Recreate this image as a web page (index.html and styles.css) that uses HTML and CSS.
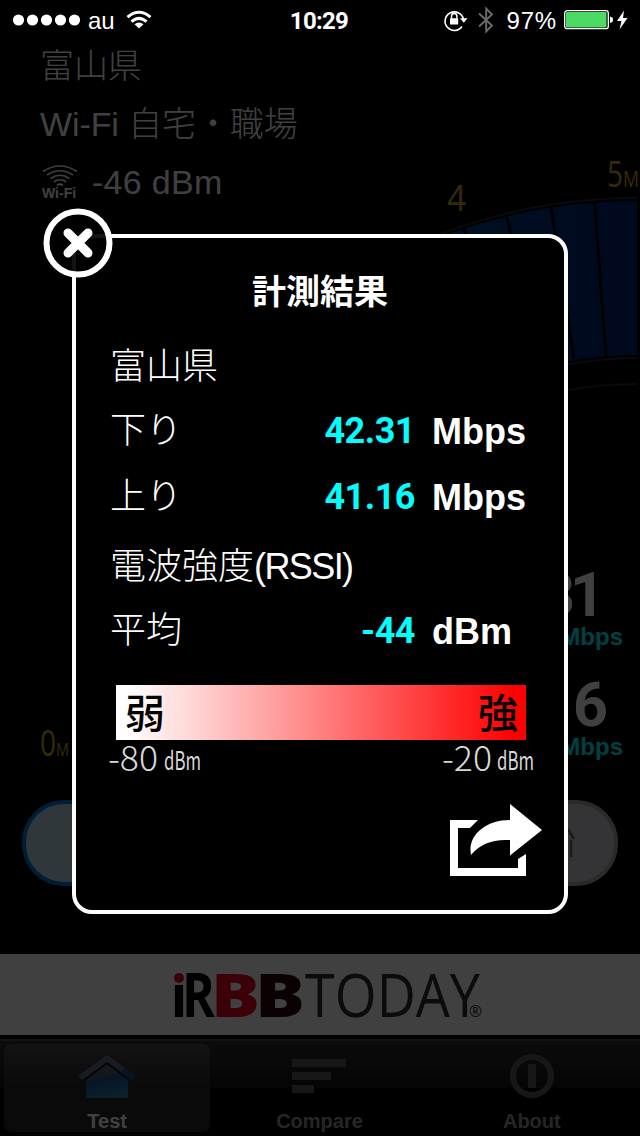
FILE: index.html
```
<!DOCTYPE html>
<html lang="ja">
<head>
  <meta charset="UTF-8">
  <meta name="viewport" content="width=device-width, initial-scale=1.0">
  <title>iRBB TODAY</title>
  <link rel="stylesheet" href="styles.css">
</head>
<body>
  <div class="screen">
    <header class="status-bar">
      <div class="status-left">
        <svg width="68" height="12" viewBox="0 0 68 12" fill="#fff">
          <circle cx="5.5" cy="6" r="5.6"/>
          <circle cx="19.5" cy="6" r="5.6"/>
          <circle cx="33.5" cy="6" r="5.6"/>
          <circle cx="47.5" cy="6" r="5.6"/>
          <circle cx="61.5" cy="6" r="5.6"/>
        </svg>
        <span class="carrier">au</span>
        <svg class="wifi" width="26" height="20" viewBox="0 0 26 20" fill="none" stroke="#fff" stroke-width="3">
          <path d="M1.5 7.2Q13-2.6 24.500 7.200"/>
          <path d="M5.500 11.700Q13 5 20.500 11.700"/>
          <path d="M8.500 14.200Q13 10.600 17.500 14.200L13 18.500Z" fill="#fff" stroke="none"/>
        </svg>
      </div>
      <span class="clock">10:29</span>
      <div class="status-right">
        <svg width="24" height="22" viewBox="0 0 24 22" fill="none" stroke="#fff">
          <path d="M18 17.500A9.300 9.300 0 1 1 19.400 10" stroke-width="1.600"/>
          <path d="M16 9.300h7.500l-3.700 4.500z" fill="#fff" stroke="none"/>
          <path d="M7.500 9.500V7.200a2.700 2.700 0 0 1 5.400 0v2.300" stroke-width="1.500"/>
          <rect x="6" y="9.300" width="8.200" height="6.200" rx=".6" fill="#fff" stroke="none"/>
        </svg>
        <svg class="bluetooth" width="16" height="28" viewBox="0 0 16 28" fill="none" stroke="#6b6b6b" stroke-width="1.900">
          <path d="M1 7.500L14 19.500L8.200 25.500V2.500L14 8.500L1 20.500"/>
        </svg>
        <span class="percent">97%</span>
        <svg width="50" height="20" viewBox="0 0 50 20">
          <rect x=".7" y=".7" width="43.600" height="18" rx="2.500" fill="none" stroke="#fff" stroke-width="1.300"/>
          <rect x="2" y="2" width="40.500" height="15.500" rx="1" fill="#4cd964"/>
          <path d="M46 6.500q3 .5 3 3.200t-3 3.200z" fill="#fff"/>
        </svg>
        <svg class="bolt" width="11" height="20" viewBox="0 0 11 20" fill="#fff">
          <path d="M7 .5L0 11h4.500L2.500 19.500L10.500 8H6z"/>
        </svg>
      </div>
    </header>

    <main class="test-view">
      <svg class="meter" viewBox="0 150 640 620">
        <defs>
          <linearGradient id="meterFill" x1="430" x2="637" y1="0" y2="0" gradientUnits="userSpaceOnUse">
            <stop offset="0" stop-color="#00408c"/>
            <stop offset="1" stop-color="#002474"/>
          </linearGradient>
        </defs>
        <path d="M430 241A557 557 0 0 1 637 201V355A403 403 0 0 0 430 411Z" fill="url(#meterFill)"/>
        <g fill="none" stroke="#282828" stroke-width="2">
          <path d="M430 238A560 560 0 0 1 637 198"/>
          <path d="M430 417A398 398 0 0 1 637 358"/>
          <path d="M430 446A374 374 0 0 1 637 384"/>
        </g>
        <g stroke="#000" stroke-width="3">
          <path d="M463.500 227L512 374"/>
          <path d="M506.500 215L542 366"/>
          <path d="M551 207L574 359"/>
          <path d="M594.500 201L606 356"/>
        </g>
        <g class="meter-label">
          <text x="447" y="211" font-size="36" textLength="19" lengthAdjust="spacingAndGlyphs">4</text>
          <text x="607" y="187" font-size="36" textLength="16" lengthAdjust="spacingAndGlyphs">5</text>
          <text x="623" y="187" font-size="22" textLength="16" lengthAdjust="spacingAndGlyphs">M</text>
          <text x="40" y="756" font-size="36" textLength="16" lengthAdjust="spacingAndGlyphs">0</text>
          <text x="56" y="756" font-size="19" textLength="13" lengthAdjust="spacingAndGlyphs">M</text>
        </g>
      </svg>

      <div class="info">
        <p>富山県</p>
        <p>Wi-Fi 自宅・職場</p>
        <p class="signal">
          <span class="signal-icon">
            <svg width="36" height="22" viewBox="0 0 36 22" fill="none" stroke="#fff" stroke-width="1.700">
              <path d="M1 6.500Q18-4.500 35 6.500"/>
              <path d="M5 10Q18 1.500 31 10"/>
              <path d="M8.500 13.500Q18 7 27.500 13.500"/>
              <path d="M12 17Q18 12.500 24 17"/>
              <path d="M15 20.500Q18 18 21 20.500"/>
            </svg>
            <span>Wi-Fi</span>
          </span>
          -46 dBm
        </p>
      </div>

      <div class="readouts">
        <div class="readout"><b>42.31</b><span>Mbps</span></div>
        <div class="readout up"><b>41.16</b><span>Mbps</span></div>
      </div>

      <div class="actions">
        <button class="action start" type="button" aria-label="Start"></button>
        <button class="action" type="button" aria-label="Log">
          <svg width="8" height="32" viewBox="0 0 8 32" fill="none" stroke="#686868" stroke-width="2.500">
            <path d="M0 2L6 12M3 13V30"/>
          </svg>
        </button>
      </div>
    </main>

    <div class="banner">
      <svg width="320" height="60" viewBox="0 0 320 60" role="img">
        <g class="logo-heavy">
          <text x="-1" y="46" font-size="58" textLength="14" lengthAdjust="spacingAndGlyphs">ı</text>
          <text x="9" y="46" font-size="60" font-weight="700" textLength="33" lengthAdjust="spacingAndGlyphs">R</text>
          <text class="logo-red" x="38" y="46" font-size="60" textLength="49" lengthAdjust="spacingAndGlyphs">B</text>
          <text class="logo-dark" x="82" y="46" font-size="60" textLength="50" lengthAdjust="spacingAndGlyphs">B</text>
        </g>
        <circle cx="6" cy="7" r="5" fill="#f00020"/>
        <g class="logo-light">
          <text x="132" y="46" font-size="60" textLength="175" lengthAdjust="spacingAndGlyphs">TODAY</text>
          <text x="296" y="46" font-size="16" textLength="13" lengthAdjust="spacingAndGlyphs">®</text>
        </g>
      </svg>
    </div>

    <nav class="tab-bar">
      <a class="tab active">
        <svg width="60" height="48" viewBox="0 0 60 48">
          <defs>
            <linearGradient id="house" x1="0" x2=".25" y1="0" y2="1">
              <stop offset=".45" stop-color="#4c5c78"/>
              <stop offset=".55" stop-color="#1c5498"/>
              <stop offset="1" stop-color="#2880a8"/>
            </linearGradient>
          </defs>
          <path d="M9 24L30 9L51 24V45H9Z" fill="url(#house)"/>
          <path d="M3 26L30 6L57 26" fill="none" stroke="#181818" stroke-width="9"/>
          <path d="M3 25L30 5L57 25" fill="none" stroke="#606c80" stroke-width="6"/>
          <path d="M46 17L57 25" stroke="#1c5098" stroke-width="6"/>
        </svg>
        <span>Test</span>
      </a>
      <a class="tab">
        <svg width="60" height="48" viewBox="0 0 60 48" fill="#5c5c5c">
          <rect x="3" y="6" width="54" height="8"/>
          <rect x="3" y="19" width="39" height="8"/>
          <rect x="3" y="32" width="22" height="8"/>
        </svg>
        <span>Compare</span>
      </a>
      <a class="tab">
        <svg width="60" height="48" viewBox="0 0 60 48">
          <circle cx="30" cy="23" r="19" fill="none" stroke="#5c5c5c" stroke-width="6"/>
          <rect x="26" y="11" width="8" height="24" fill="#5c5c5c"/>
        </svg>
        <span>About</span>
      </a>
    </nav>

    <div class="overlay"></div>

    <section class="dialog">
      <button class="close" type="button" aria-label="Close">
        <svg width="76" height="76" viewBox="0 0 76 76">
          <circle cx="38" cy="38" r="31.500" fill="#000" fill-opacity=".92" stroke="#fff" stroke-width="6"/>
          <path d="M28 28L48 48M48 28L28 48" stroke="#fff" stroke-width="9" stroke-linecap="round"/>
        </svg>
      </button>
      <h1>計測結果</h1>
      <p class="row place">富山県</p>
      <div class="row"><span>下り</span><b>42.31</b><em>Mbps</em></div>
      <div class="row"><span>上り</span><b>41.16</b><em>Mbps</em></div>
      <p class="row rssi">電波強度<span>(RSSI)</span></p>
      <div class="row average"><span>平均</span><b>-44</b><em>dBm</em></div>
      <div class="scale"><span>弱</span><span>強</span></div>
      <div class="scale-labels">
        <svg width="92" height="32" viewBox="0 0 92 32">
          <text x="-1" y="28" font-size="34" textLength="50" lengthAdjust="spacingAndGlyphs">-80</text>
          <text class="unit" x="55" y="27" font-size="26" textLength="37" lengthAdjust="spacingAndGlyphs">dBm</text>
        </svg>
        <svg width="92" height="32" viewBox="0 0 92 32">
          <text x="-1" y="28" font-size="34" textLength="50" lengthAdjust="spacingAndGlyphs">-20</text>
          <text class="unit" x="54" y="27" font-size="26" textLength="37" lengthAdjust="spacingAndGlyphs">dBm</text>
        </svg>
      </div>
      <button class="share" type="button" aria-label="Share">
        <svg width="92" height="72" viewBox="20 14 92 72" fill="#fff">
          <path d="M20 30H48L40 38H28V78H88V69L96 64V86H20Z"/>
          <path d="M80 14L112 40L80 65.500V50C62 49 50 54 41 65C37 46 55 30 80 30Z"/>
        </svg>
      </button>
    </section>
  </div>
</body>
</html>
```

FILE: styles.css
```
* {
  box-sizing: border-box;
}
body {
  margin: 0;
  background: #000;
  color: #fff;
  font-family: "Liberation Sans", "Noto Sans CJK JP", sans-serif;
}
h1, p {
  margin: 0;
}
svg {
  display: block;
  flex: none;
  overflow: visible;
}
button {
  padding: 0;
  border: none;
  background: none;
}
.screen {
  position: relative;
  display: flex;
  flex-direction: column;
  width: 640px;
  height: 1136px;
  overflow: hidden;
}

/* status bar */
.status-bar {
  position: relative;
  z-index: 2;
  display: grid;
  grid-template-columns: 1fr auto 1fr;
  align-items: center;
  height: 40px;
  padding: 0 12px 0 13px;
  font-size: 24px;
}
.status-left,
.status-right {
  display: flex;
  align-items: center;
}
.status-right {
  justify-content: flex-end;
}
.carrier {
  margin: 2px 11px 0 7px;
}
.clock {
  margin-right: 3px;
  padding-top: 2px;
  font-family: Roboto, sans-serif;
  font-size: 24px;
  font-weight: bold;
  letter-spacing: -0.7px;
}
.bluetooth {
  margin: 0 13px 0 10px;
}
.percent {
  margin-right: 7px;
  padding-top: 2px;
  letter-spacing: 0.8px;
}
.bolt {
  margin-left: 3px;
}

/* test screen */
.test-view {
  display: flex;
  flex-direction: column;
  height: 914px;
}
.meter {
  position: absolute;
  top: 150px;
  left: 0;
  width: 640px;
  height: 620px;
}
.meter-label {
  fill: #d0a818;
  font-family: "Open Sans", sans-serif;
  font-weight: 500;
}
.info {
  height: 526px;
  padding-left: 40px;
  font-size: 34px;
  font-weight: 300;
}
.info p {
  height: 58px;
  line-height: 52px;
  letter-spacing: -0.1px;
  white-space: nowrap;
}
.info .signal {
  display: flex;
  align-items: center;
  gap: 15px;
  height: 52px;
  letter-spacing: 0.3px;
}
.signal-icon {
  width: 37px;
  padding-left: 2px;
  font-size: 14px;
  font-weight: bold;
  line-height: 13px;
  letter-spacing: 0;
}
.readout {
  height: 110px;
  padding-right: 17px;
  text-align: right;
}
.readout b {
  display: block;
  padding-right: 23px;
  font-family: Roboto, sans-serif;
  font-size: 61px;
  line-height: 58px;
  letter-spacing: -5px;
}
.readout.up b {
  padding-right: 15px;
  letter-spacing: 0;
}
.readout span {
  display: block;
  color: #0ff;
  font-size: 24px;
  font-weight: bold;
  line-height: 26px;
}
.actions {
  display: flex;
  justify-content: space-between;
  margin-top: 14px;
  padding: 0 22px;
}
.action {
  display: flex;
  justify-content: flex-end;
  align-items: center;
  width: 285px;
  height: 86px;
  padding-right: 38px;
  border: 4px solid #a8a8a8;
  border-radius: 42px;
  background: #d0d0d6;
}
.action.start {
  border-color: #0078d8;
  background: #bcdcec;
}

/* logo banner */
.banner {
  height: 81px;
  padding: 17px 0 0 173px;
  background: #fff;
}
.logo-heavy {
  font-family: "Open Sans", sans-serif;
  font-weight: 800;
}
.logo-red {
  fill: #f00020;
}
.logo-dark {
  fill: #2c0008;
}
.logo-light {
  fill: #302828;
  font-family: "Open Sans", sans-serif;
}

/* tab bar */
.tab-bar {
  display: grid;
  grid-template-columns: repeat(3, 1fr);
  height: 101px;
  padding: 9px 3px 4px 0;
  background: linear-gradient(#000 4px, #484848 4px, #484848 6px, #303030 6px, #141414 53px, #000 53px);
}
.tab {
  display: flex;
  flex-direction: column;
  align-items: center;
  gap: 9px;
  margin: 0 2px 0 4px;
  padding-top: 9px;
  border-radius: 7px;
  color: #989898;
  font-size: 20px;
  font-weight: bold;
  line-height: 22px;
}
.tab.active {
  background: linear-gradient(#4c4c4c, #282828 50%, #282828);
  color: #fff;
}

.overlay {
  position: absolute;
  inset: 0;
  background: rgba(0, 0, 0, 0.75);
}

/* result dialog */
.dialog {
  position: absolute;
  top: 234px;
  left: 72px;
  display: flex;
  flex-direction: column;
  width: 496px;
  height: 680px;
  padding: 31px 29px 0 34px;
  border: 4px solid #fff;
  border-radius: 20px;
  background: #000;
}
.close {
  position: absolute;
  top: -33px;
  left: -36px;
}
.dialog h1 {
  height: 65px;
  padding-right: 5px;
  font-size: 34px;
  line-height: 46px;
  text-align: center;
}
.row {
  display: grid;
  grid-template-columns: 1fr 110px 94px;
  column-gap: 17px;
  height: 66px;
  margin-right: 9px;
  font-size: 36px;
  font-weight: 300;
  line-height: 62px;
}
.row b {
  color: #0ff;
  font-family: Roboto, sans-serif;
  font-size: 36px;
  font-weight: bold;
  letter-spacing: -0.5px;
  text-align: right;
}
.row em {
  padding-top: 1px;
  font-style: normal;
  font-weight: bold;
}
.row.place {
  line-height: 66px;
}
.row.rssi {
  display: block;
  height: 67px;
  line-height: 69px;
}
.row.average {
  line-height: 64px;
}
.rssi span {
  letter-spacing: -1.6px;
}
.scale {
  display: flex;
  justify-content: space-between;
  height: 55px;
  margin: 20px 9px 0 6px;
  padding: 0 8px 0 9px;
  background: linear-gradient(90deg, #fff 3%, #f00 97%);
  color: #000;
  font-size: 40px;
  font-weight: 500;
  line-height: 59px;
}
.scale-labels {
  display: flex;
  justify-content: space-between;
  margin: 3px 0 0 -1px;
  fill: #d8d8d8;
  font-family: "Noto Sans CJK JP", sans-serif;
  font-weight: 300;
}
.unit {
  font-weight: 400;
}
.share {
  align-self: flex-end;
  margin: 29px -7px 0 0;
}
```
